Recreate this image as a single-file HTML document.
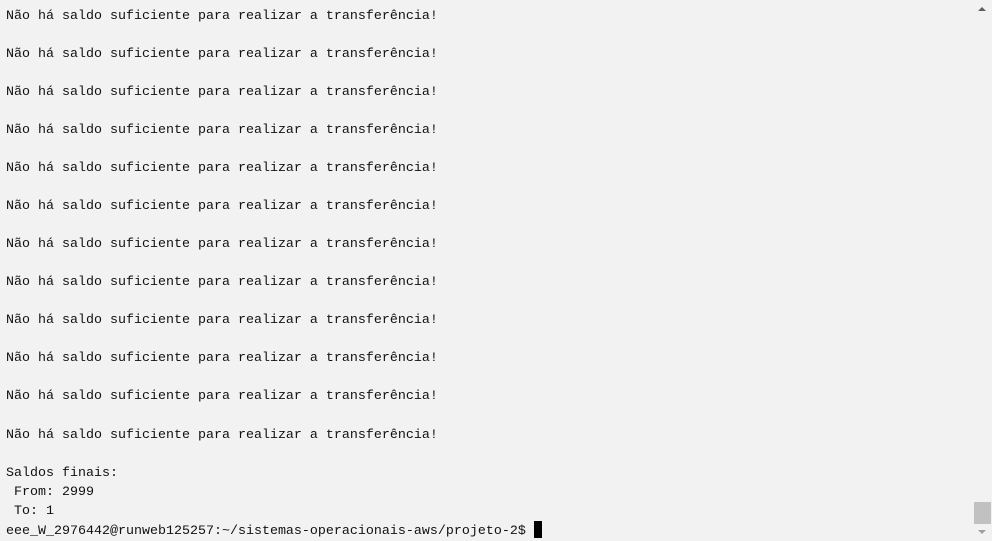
<!DOCTYPE html>
<html><head><meta charset="utf-8"><style>
html,body{margin:0;padding:0;width:992px;height:538px;overflow:hidden;background:#f2f2f2}
pre{position:absolute;left:6px;top:6.5px;margin:0;font-family:"Liberation Mono","DejaVu Sans Mono",monospace;font-size:13.33px;line-height:19.05px;color:#111;white-space:pre}
.cur{display:inline-block;width:8px;height:17px;background:#000;vertical-align:-4px}
.sb{position:absolute;right:0;top:0;width:18px;height:538px;background:#f2f2f2}
.thumb{position:absolute;left:974px;top:502px;width:17px;height:22px;background:#c1c1c1}
.up{position:absolute;left:978px;top:7px;width:0;height:0;border-left:4px solid transparent;border-right:4px solid transparent;border-bottom:4px solid #606060}
.dn{position:absolute;left:978px;top:530px;width:0;height:0;border-left:4px solid transparent;border-right:4px solid transparent;border-top:4px solid #a0a0a0}
</style></head><body>
<pre>Não há saldo suficiente para realizar a transferência!

Não há saldo suficiente para realizar a transferência!

Não há saldo suficiente para realizar a transferência!

Não há saldo suficiente para realizar a transferência!

Não há saldo suficiente para realizar a transferência!

Não há saldo suficiente para realizar a transferência!

Não há saldo suficiente para realizar a transferência!

Não há saldo suficiente para realizar a transferência!

Não há saldo suficiente para realizar a transferência!

Não há saldo suficiente para realizar a transferência!

Não há saldo suficiente para realizar a transferência!

Não há saldo suficiente para realizar a transferência!

Saldos finais:
 From: 2999
 To: 1
eee_W_2976442@runweb125257:~/sistemas-operacionais-aws/projeto-2$ <span class="cur"></span></pre>
<div class="sb"></div>
<div class="thumb"></div>
<div class="up"></div>
<div class="dn"></div>
</body></html>
